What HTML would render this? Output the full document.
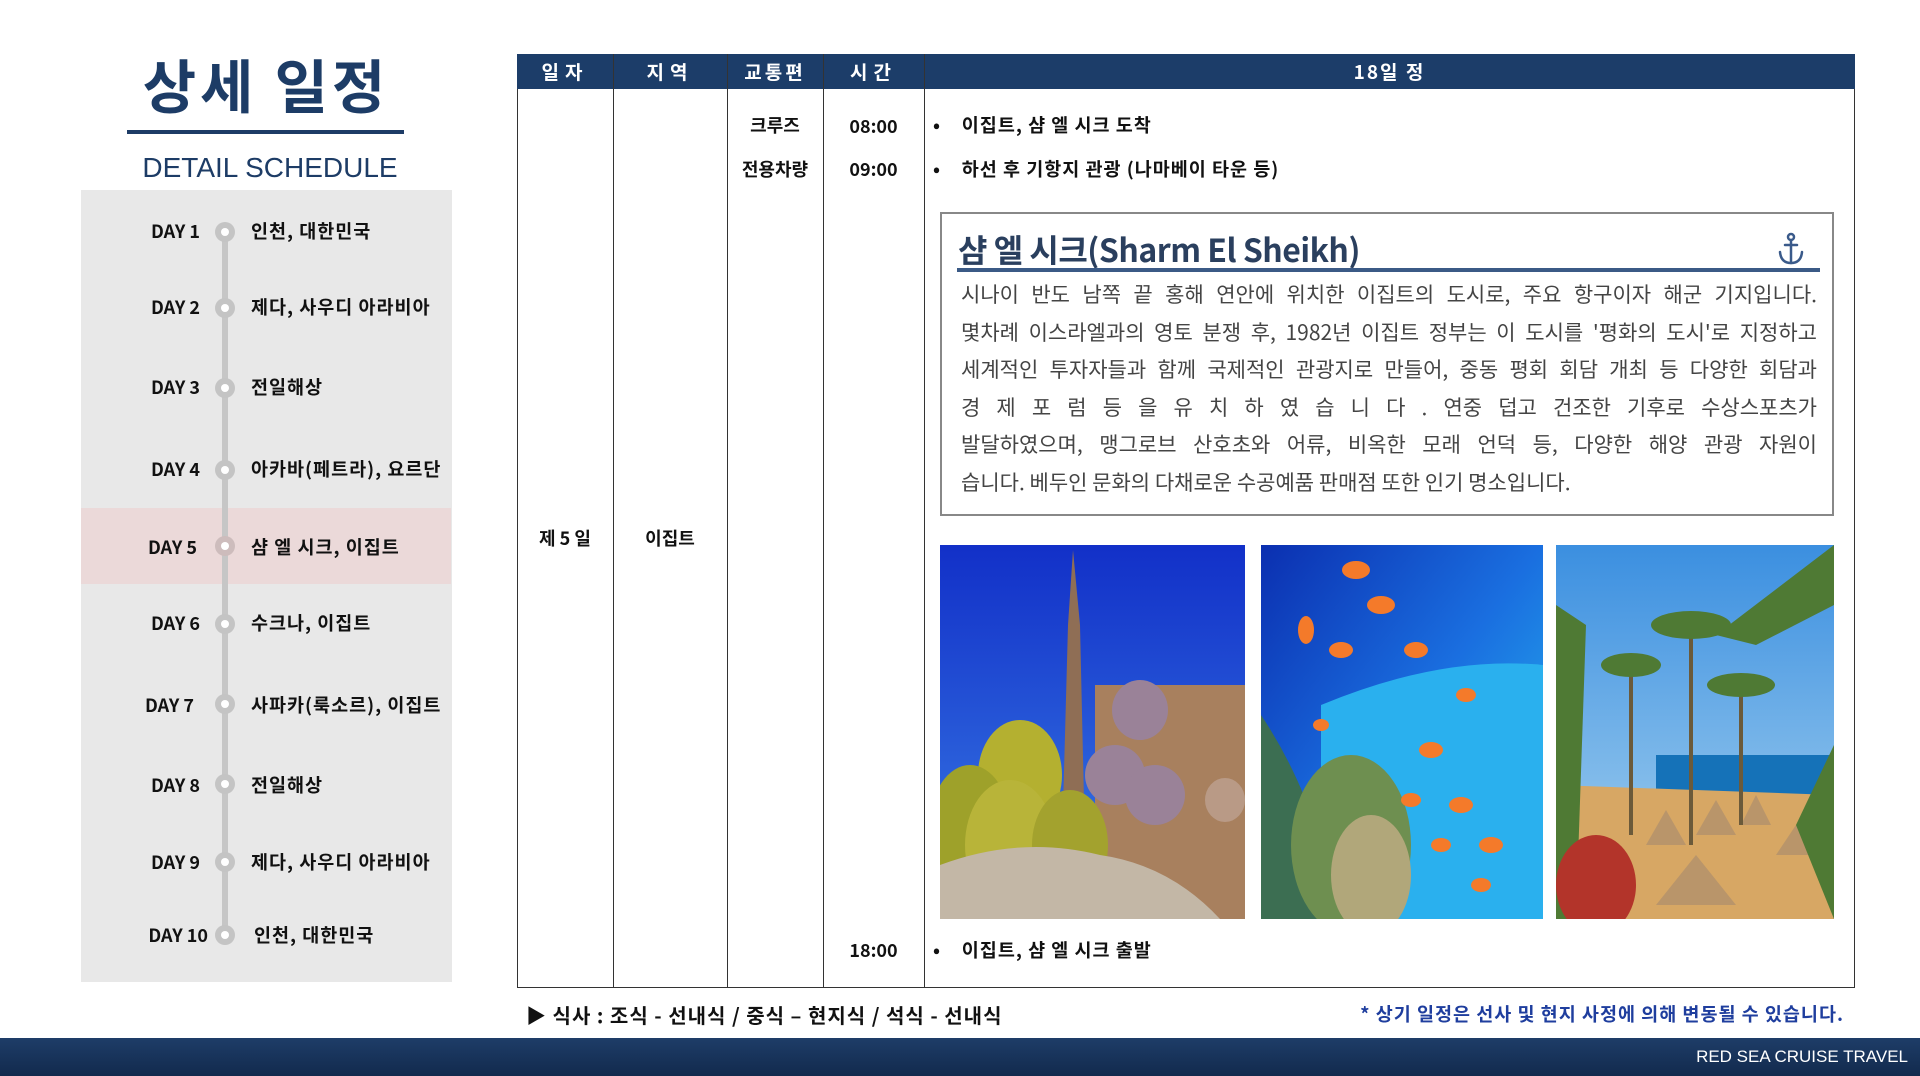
<!DOCTYPE html>
<html><head><meta charset="utf-8">
<style>
*{margin:0;padding:0;box-sizing:border-box}
body{width:1920px;height:1076px;background:#fff;position:relative;overflow:hidden;font-family:"Liberation Sans","Noto Sans CJK KR",sans-serif;color:#111}
.a{position:absolute}
.b{font-weight:bold}
.title{left:100px;width:332px;top:48px;text-align:center;font-size:58px;font-weight:bold;color:#1d3c66;letter-spacing:4px;font-family:"Noto Sans CJK KR",sans-serif;line-height:70px}
.day{width:120px;text-align:right;left:80px;font-size:18px;font-weight:bold;font-family:"Noto Sans CJK KR",sans-serif}
.pl{left:251px;font-size:18.5px;font-weight:bold;font-family:"Noto Sans CJK KR",sans-serif;letter-spacing:1px}
.dot{left:215px;width:20px;height:20px;border-radius:50%;background:#c4c4c4}
.dot:after{content:"";position:absolute;left:6px;top:6px;width:8px;height:8px;border-radius:50%;background:#fff}
.th{top:54px;height:35px;line-height:35px;color:#fff;font-size:19px;font-weight:bold;text-align:center;letter-spacing:6px;font-family:"Noto Sans CJK KR",sans-serif}
.vl{top:54px;width:1px;height:933px;background:#333}
.c{font-size:18px;font-weight:bold;text-align:center;font-family:"Noto Sans CJK KR",sans-serif;line-height:24px}
.bl{font-size:18.5px;font-weight:bold;font-family:"Noto Sans CJK KR",sans-serif;line-height:24px;letter-spacing:1px}
.para{left:961px;top:276px;width:856px;font-size:21px;line-height:37.5px;color:#444;font-family:"Noto Sans CJK KR",sans-serif}
.para div{text-align:justify;text-align-last:justify;white-space:nowrap;height:37.5px}
.para div.l{text-align-last:left}
</style></head><body>
<div class="a title">상세 일정</div>
<div class="a" style="left:127px;top:130px;width:277px;height:4px;background:#1d3c66"></div>
<div class="a" style="left:100px;width:340px;top:148px;text-align:center;font-size:28px;color:#1d3c66;line-height:40px">DETAIL SCHEDULE</div>

<div class="a" style="left:81px;top:190px;width:371px;height:792px;background:#e8e8e8"></div>
<div class="a" style="left:81px;top:508px;width:370px;height:76px;background:#ebd9d9"></div>
<div class="a" style="left:222px;top:230px;width:6px;height:704px;background:#c6c6c6"></div>

<div class="a day" style="top:218px">DAY 1</div><div class="a dot" style="top:222px"></div><div class="a pl" style="top:218px">인천, 대한민국</div>
<div class="a day" style="top:294px">DAY 2</div><div class="a dot" style="top:298px"></div><div class="a pl" style="top:294px">제다, 사우디 아라비아</div>
<div class="a day" style="top:374px">DAY 3</div><div class="a dot" style="top:378px"></div><div class="a pl" style="top:374px">전일해상</div>
<div class="a day" style="top:456px">DAY 4</div><div class="a dot" style="top:460px"></div><div class="a pl" style="top:456px">아카바(페트라), 요르단</div>
<div class="a day" style="top:534px;left:77px">DAY 5</div><div class="a dot" style="top:536px;background:#cdbcbc"></div><div class="a pl" style="top:534px">샴 엘 시크, 이집트</div>
<div class="a day" style="top:610px">DAY 6</div><div class="a dot" style="top:614px"></div><div class="a pl" style="top:610px">수크나, 이집트</div>
<div class="a day" style="top:692px;left:74px">DAY 7</div><div class="a dot" style="top:694px"></div><div class="a pl" style="top:692px">사파카(룩소르), 이집트</div>
<div class="a day" style="top:772px">DAY 8</div><div class="a dot" style="top:774px"></div><div class="a pl" style="top:772px">전일해상</div>
<div class="a day" style="top:849px">DAY 9</div><div class="a dot" style="top:852px"></div><div class="a pl" style="top:849px">제다, 사우디 아라비아</div>
<div class="a day" style="top:922px;left:88px">DAY 10</div><div class="a dot" style="top:925px"></div><div class="a pl" style="top:922px;left:254px">인천, 대한민국</div>

<!-- table -->
<div class="a" style="left:517px;top:54px;width:1338px;height:934px;border:1px solid #333"></div>
<div class="a" style="left:517px;top:54px;width:1338px;height:35px;background:#1c3d69"></div>
<div class="a th" style="left:517px;width:96px">일자</div>
<div class="a th" style="left:613px;width:114px">지역</div>
<div class="a th" style="left:727px;width:96px;letter-spacing:3px">교통편</div>
<div class="a th" style="left:823px;width:101px">시간</div>
<div class="a th" style="left:924px;width:931px;letter-spacing:2px">18일 정</div>
<div class="a vl" style="left:613px"></div>
<div class="a vl" style="left:727px"></div>
<div class="a vl" style="left:823px"></div>
<div class="a vl" style="left:924px"></div>

<div class="a c" style="left:727px;width:96px;top:113px">크루즈</div>
<div class="a c" style="left:727px;width:96px;top:157px">전용차량</div>
<div class="a c" style="left:823px;width:101px;top:114px">08:00</div>
<div class="a c" style="left:823px;width:101px;top:157px">09:00</div>
<div class="a c" style="left:823px;width:101px;top:938px">18:00</div>
<div class="a c" style="left:517px;width:96px;top:526px">제 5 일</div>
<div class="a c" style="left:613px;width:114px;top:526px">이집트</div>
<div class="a bl" style="left:933px;top:113px">•&nbsp;&nbsp;&nbsp;&nbsp;이집트, 샴 엘 시크 도착</div>
<div class="a bl" style="left:933px;top:157px">•&nbsp;&nbsp;&nbsp;&nbsp;하선 후 기항지 관광 (나마베이 타운 등)</div>
<div class="a bl" style="left:933px;top:938px">•&nbsp;&nbsp;&nbsp;&nbsp;이집트, 샴 엘 시크 출발</div>

<!-- info box -->
<div class="a" style="left:940px;top:212px;width:894px;height:304px;border:2px solid #888"></div>
<div class="a" style="left:958px;top:226px;font-size:32px;font-weight:bold;color:#2a3f5e;font-family:'Noto Sans CJK KR',sans-serif;line-height:46px;letter-spacing:-0.5px">샴 엘 시크(Sharm El Sheikh)</div>
<svg class="a" style="left:1776px;top:232px" width="30" height="34" viewBox="0 0 30 34"><g fill="none" stroke="#3a5a8a" stroke-width="2.5" stroke-linecap="round"><circle cx="15" cy="5" r="3"/><line x1="15" y1="8" x2="15" y2="31"/><line x1="9" y1="13" x2="21" y2="13"/><path d="M4 20 Q5 31 15 31 Q25 31 26 20"/></g></svg>
<div class="a" style="left:957px;top:268px;width:863px;height:4px;background:#3b5a86"></div>
<div class="a para">
<div>시나이 반도 남쪽 끝 홍해 연안에 위치한 이집트의 도시로, 주요 항구이자 해군 기지입니다.</div>
<div>몇차례 이스라엘과의 영토 분쟁 후, 1982년 이집트 정부는 이 도시를 '평화의 도시'로 지정하고</div>
<div>세계적인 투자자들과 함께 국제적인 관광지로 만들어, 중동 평회 회담 개최 등 다양한 회담과</div>
<div>경 제 포 럼 등 을 유 치 하 였 습 니 다 . 연중 덥고 건조한 기후로 수상스포츠가</div>
<div>발달하였으며, 맹그로브 산호초와 어류, 비옥한 모래 언덕 등, 다양한 해양 관광 자원이</div>
<div class="l">습니다. 베두인 문화의 다채로운 수공예품 판매점 또한 인기 명소입니다.</div>
</div>

<!-- images -->
<svg class="a" style="left:940px;top:545px" width="305" height="374" viewBox="0 0 305 374">
<defs><linearGradient id="s1" x1="0" y1="0" x2="0" y2="1"><stop offset="0" stop-color="#1230c8"/><stop offset="1" stop-color="#3a7de6"/></linearGradient></defs>
<rect width="305" height="374" fill="url(#s1)"/>
<polygon points="133,5 128,80 122,300 145,300 140,80" fill="#8f6e55"/>
<rect x="155" y="140" width="150" height="234" fill="#a8805e"/>
<ellipse cx="200" cy="165" rx="28" ry="30" fill="#9a8298"/>
<ellipse cx="175" cy="230" rx="30" ry="30" fill="#9a8298"/>
<ellipse cx="215" cy="250" rx="30" ry="30" fill="#9a8298"/>
<ellipse cx="285" cy="255" rx="20" ry="22" fill="#b99a86"/>
<ellipse cx="80" cy="230" rx="42" ry="55" fill="#b4b030"/>
<ellipse cx="30" cy="280" rx="40" ry="60" fill="#9ea12a"/>
<ellipse cx="70" cy="300" rx="45" ry="65" fill="#b8b439"/>
<ellipse cx="130" cy="300" rx="38" ry="55" fill="#a3a22e"/>
<path d="M0 320 Q80 290 160 310 Q230 320 280 374 L0 374Z" fill="#c3b7a6"/>
</svg>
<svg class="a" style="left:1261px;top:545px" width="282" height="374" viewBox="0 0 282 374">
<defs><linearGradient id="s2" x1="0" y1="0" x2="1" y2="1"><stop offset="0" stop-color="#0b2fb0"/><stop offset="0.5" stop-color="#1a6fe0"/><stop offset="1" stop-color="#28c0f0"/></linearGradient></defs>
<rect width="282" height="374" fill="url(#s2)"/>
<path d="M60 160 Q180 110 282 120 L282 374 L60 374Z" fill="#2ab0ee"/>
<path d="M0 170 Q40 230 60 300 L110 374 L0 374Z" fill="#3c6e52"/>
<ellipse cx="90" cy="300" rx="60" ry="90" fill="#6e8f50"/>
<ellipse cx="110" cy="330" rx="40" ry="60" fill="#b1a77a"/>
<g fill="#f47a2a"><ellipse cx="95" cy="25" rx="14" ry="9"/><ellipse cx="120" cy="60" rx="14" ry="9"/><ellipse cx="80" cy="105" rx="12" ry="8"/><ellipse cx="155" cy="105" rx="12" ry="8"/><ellipse cx="45" cy="85" rx="8" ry="14"/><ellipse cx="170" cy="205" rx="12" ry="8"/><ellipse cx="200" cy="260" rx="12" ry="8"/><ellipse cx="230" cy="300" rx="12" ry="8"/><ellipse cx="150" cy="255" rx="10" ry="7"/><ellipse cx="180" cy="300" rx="10" ry="7"/><ellipse cx="205" cy="150" rx="10" ry="7"/><ellipse cx="220" cy="340" rx="10" ry="7"/><ellipse cx="60" cy="180" rx="8" ry="6"/></g>
</svg>
<svg class="a" style="left:1556px;top:545px" width="278" height="374" viewBox="0 0 278 374">
<defs><linearGradient id="s3" x1="0" y1="0" x2="0" y2="1"><stop offset="0" stop-color="#3b8fe0"/><stop offset="1" stop-color="#a9d4f0"/></linearGradient></defs>
<rect width="278" height="374" fill="url(#s3)"/>
<rect x="100" y="210" width="178" height="60" fill="#1572b8"/>
<path d="M0 240 L278 250 L278 374 L0 374Z" fill="#d7a764"/>
<g fill="#b9956a"><polygon points="110,265 90,300 130,300"/><polygon points="160,255 140,290 180,290"/><polygon points="200,250 185,280 215,280"/><polygon points="140,310 100,360 180,360"/><polygon points="240,280 220,310 260,310"/></g>
<g stroke="#6b5a3a" stroke-width="4"><line x1="135" y1="80" x2="135" y2="300"/><line x1="185" y1="140" x2="185" y2="280"/><line x1="75" y1="120" x2="75" y2="290"/></g>
<g fill="#4f7a34"><ellipse cx="135" cy="80" rx="40" ry="14"/><ellipse cx="185" cy="140" rx="34" ry="12"/><ellipse cx="75" cy="120" rx="30" ry="12"/><path d="M278 0 L160 90 L200 100 L278 60Z"/><path d="M0 60 L30 80 L20 374 L0 374Z"/><path d="M278 200 L240 280 L278 374Z"/></g>
<ellipse cx="40" cy="340" rx="40" ry="50" fill="#b3342a"/>
</svg>

<!-- footer -->
<div class="a b" style="left:526px;top:1002px;font-size:20px;letter-spacing:1px;font-family:'Noto Sans CJK KR',sans-serif;line-height:26px">▶ 식사 : 조식 - 선내식 / 중식 – 현지식 / 석식 - 선내식</div>
<div class="a b" style="right:76px;top:1002px;font-size:18.5px;letter-spacing:1px;color:#1f3e9e;font-family:'Noto Sans CJK KR',sans-serif;line-height:24px">* 상기 일정은 선사 및 현지 사정에 의해 변동될 수 있습니다.</div>
<div class="a" style="left:0;top:1038px;width:1920px;height:38px;background:linear-gradient(180deg,#1e3d68,#122a4d)"></div>
<div class="a" style="right:12px;top:1045px;font-size:17px;color:#fff;line-height:24px">RED SEA CRUISE TRAVEL</div>
</body></html>
